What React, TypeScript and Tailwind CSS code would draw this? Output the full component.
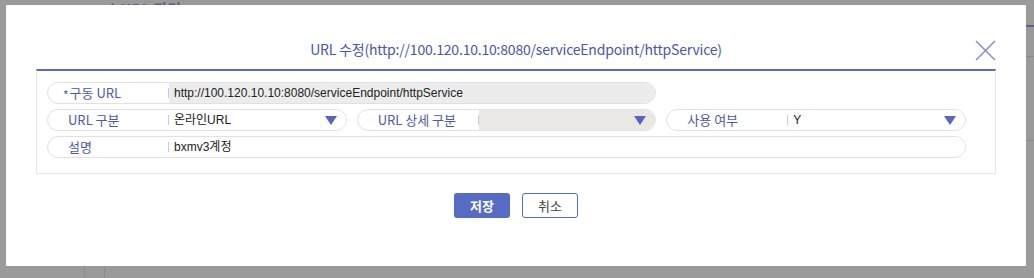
import React from "react";

const labelFont = { fontFamily: '"Noto Sans CJK KR", "Noto Sans", sans-serif' };

function Caret() {
  return (
    <svg width="12" height="9" viewBox="0 0 12 9" className="shrink-0">
      <path d="M0 0 H12 L6 9 Z" fill="#5566bb" />
    </svg>
  );
}

interface FieldProps {
  label: string;
  required?: boolean;
  value?: string;
  select?: boolean;
  tone?: "white" | "gray" | "disabled";
  className?: string;
}

function Field({ label, required, value, select, tone = "white", className = "" }: FieldProps) {
  const bg =
    tone === "gray" ? "bg-[#ececec]" : tone === "disabled" ? "bg-[#e9e8e4]" : "bg-white";
  return (
    <div
      className={`flex h-[22px] items-center overflow-hidden rounded-full border border-[#e1e1e1] bg-white ${className}`}
    >
      <div
        className={`flex h-full w-[120px] shrink-0 items-center text-[13px] text-[#4e5aa3] ${
          required ? "pl-[15px]" : "pl-[20px]"
        }`}
        style={labelFont}
      >
        {required && (
          <span className="mr-[1px] mt-[3px] text-[12px] leading-none text-[#4e5aa3]">*</span>
        )}
        {label}
      </div>
      <div className="h-[10px] w-px shrink-0 bg-[#c9cbe0]" />
      <div className={`flex h-full flex-1 items-center pl-[5px] pr-[9px] ${bg}`}>
        <span
          className="flex-1 truncate text-[12px] text-[#222]"
          style={{ fontFamily: '"Liberation Sans", "Noto Sans CJK KR", sans-serif' }}
        >
          {value}
        </span>
        {select && <Caret />}
      </div>
    </div>
  );
}

export default function App() {
  return (
    <div className="relative h-[278px] w-[1034px] overflow-hidden bg-[#9a9a9a]">
      {/* page behind the backdrop */}
      <div
        className="absolute left-[105px] top-0 flex gap-[30px] text-[#5a5f80]"
        style={labelFont}
      >
        <span className="text-[15px] font-bold leading-[18px]">▲URL 관리</span>
        <span className="pt-[4px] text-[12px] leading-[14px] text-[#6e6e6e]">
          배치, 온라인에 사용하는 URL 주소를 관리하는 페이지입니다
        </span>
      </div>
      <div className="absolute right-0 top-[25px] h-[2px] w-[8px] bg-[#5a6190]" />
      <div className="absolute right-0 top-[56px] h-px w-[8px] bg-[#8a8a8a]" />
      <div className="absolute right-0 top-[140px] h-px w-[8px] bg-[#8a8a8a]" />
      <div className="absolute left-[84px] top-[266px] h-[12px] w-px bg-[#8e8e8e]" />
      <div className="absolute left-[104px] top-[266px] h-[12px] w-px bg-[#8e8e8e]" />

      {/* modal */}
      <div className="absolute left-[6px] top-[5px] flex h-[261px] w-[1020px] flex-col bg-white">
        <div className="relative flex h-[64px] items-end justify-center pb-[10px]">
          <h2
            className="text-[14px] leading-[20px] tracking-[-0.2px] text-[#4b57a6]"
            style={labelFont}
          >
            URL 수정(http://100.120.10.10:8080/serviceEndpoint/httpService)
          </h2>
          <svg
            className="absolute right-[30px] top-[35px]"
            width="21"
            height="21"
            viewBox="0 0 21 21"
          >
            <path d="M1 1 L20 20 M20 1 L1 20" stroke="#7d88cf" strokeWidth="1.4" />
          </svg>
        </div>

        <div className="mx-[30px] border-x border-b border-t-2 border-[#e6e6e6] border-t-[#5b68be] pb-[15px] pl-[10px] pr-[29px] pt-[11px]">
          <div className="grid grid-cols-3 gap-x-[10px] gap-y-[5px]">
            <Field
              className="col-span-2"
              label="구동 URL"
              required
              tone="gray"
              value="http://100.120.10.10:8080/serviceEndpoint/httpService"
            />
            <div />
            <Field label="URL 구분" value="온라인URL" select />
            <Field label="URL 상세 구분" tone="disabled" select />
            <Field label="사용 여부" value="Y" select />
            <Field className="col-span-3" label="설명" value="bxmv3계정" />
          </div>
        </div>

        <div className="mt-[19px] flex justify-center gap-[12px]" style={labelFont}>
          <button className="h-[25px] w-[56px] rounded-[3px] bg-[#566bc4] text-[13px] font-bold text-white">
            저장
          </button>
          <button className="h-[25px] w-[56px] rounded-[3px] border border-[#566bc4] bg-white text-[13px] text-[#444]">
            취소
          </button>
        </div>
      </div>
    </div>
  );
}
